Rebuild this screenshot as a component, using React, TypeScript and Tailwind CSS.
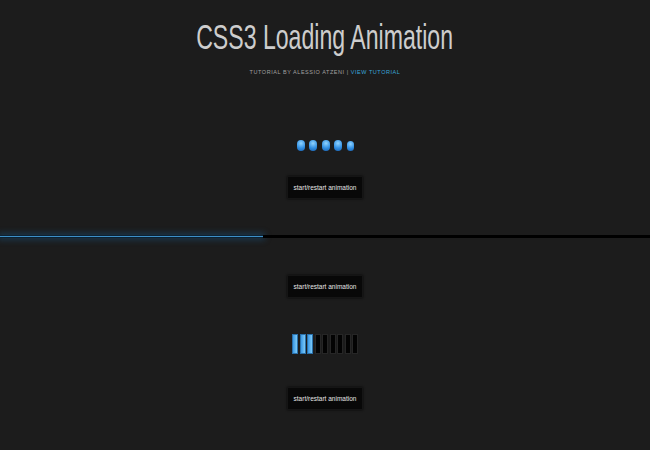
import React from "react";

function Btn() {
  return (
    <div className="w-[76px] h-[23px] bg-[#080808] border border-[#151515] shadow-[0_0_2px_rgba(0,0,0,0.8)] flex items-center justify-center text-[6.5px] text-[#e6e6e6] whitespace-nowrap font-['Liberation_Sans',Arial,sans-serif]">
      start/restart animation
    </div>
  );
}

export default function App() {
  const dots = [0, 1, 2, 3, 4];
  const bars = [0, 1, 2, 3, 4, 5, 6, 7, 8];
  return (
    <div className="w-[650px] h-[450px] bg-[#1c1c1c] overflow-hidden flex flex-col items-center pt-[16px] font-['Liberation_Sans',Arial,sans-serif]">
      <div className="h-[40px] w-full flex items-center justify-center">
        <span className="inline-block text-[35px] leading-none text-[#cdcdcd] scale-x-[0.66] whitespace-nowrap">
          CSS3 Loading Animation
        </span>
      </div>
      <div className="mt-[11px] h-[10px] flex items-center text-[5.5px] tracking-[0.55px] text-[#a0a0a0] whitespace-nowrap">
        TUTORIAL BY ALESSIO ATZENI <span className="mx-[2px]">|</span>
        <span className="text-[#3aa6d8]">VIEW TUTORIAL</span>
      </div>
      <div className="mt-[63px] h-[11px] flex items-center gap-[4.5px]">
        {dots.map((d) => (
          <div
            key={d}
            className={
              d === 4
                ? "w-[7px] h-[10px] rounded-full bg-[radial-gradient(circle_at_50%_30%,#8fd3ff,#3290e4_55%,#1a62b0)]"
                : "w-[8px] h-[11px] rounded-full bg-[radial-gradient(circle_at_50%_30%,#8fd3ff,#3290e4_55%,#1a62b0)]"
            }
          />
        ))}
      </div>
      <div className="mt-[25px]">
        <Btn />
      </div>
      <div className="mt-[36px] w-full h-[3px] flex">
        <div className="w-[263px] h-full flex items-center shadow-[0_0_6px_2px_rgba(30,110,170,0.35)] bg-[#0d2233]">
          <div className="w-full h-[1.5px] bg-[#3d8fc7]" />
        </div>
        <div className="flex-1 h-full bg-black" />
      </div>
      <div className="mt-[37px]">
        <Btn />
      </div>
      <div className="mt-[36px] h-[20px] flex gap-[1.5px]">
        {bars.map((b) => (
          <div
            key={b}
            className={
              b < 3
                ? "w-[6px] h-full bg-[linear-gradient(90deg,#3a98e6,#7ccaf7)] border border-[#2a70aa]"
                : "w-[6px] h-full bg-[#030303] border border-[#262626]"
            }
          />
        ))}
      </div>
      <div className="mt-[33px]">
        <Btn />
      </div>
    </div>
  );
}
